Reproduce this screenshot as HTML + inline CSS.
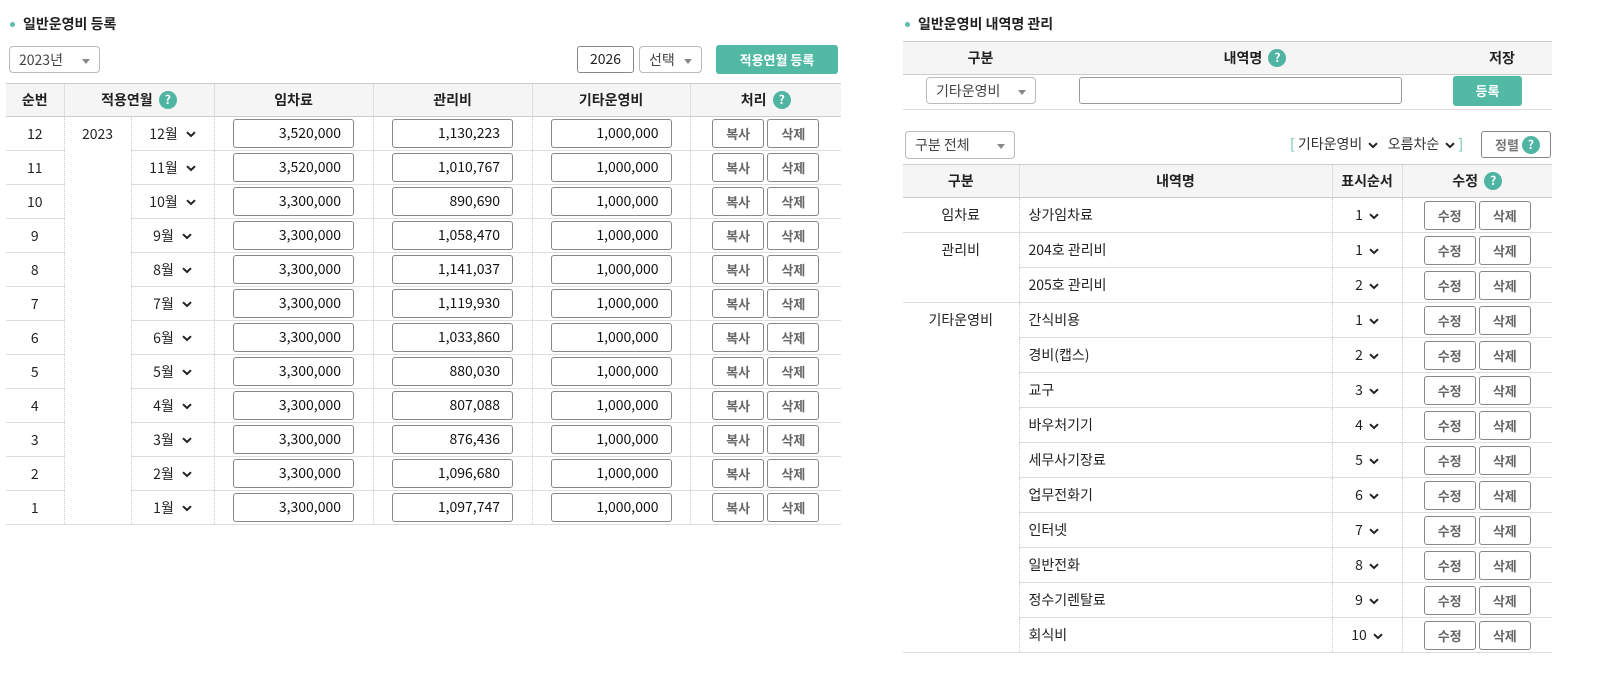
<!DOCTYPE html>
<html><head><meta charset="utf-8">
<style>
*{box-sizing:border-box;margin:0;padding:0}
body{width:1597px;height:682px;background:#fff;font-family:"Noto Sans CJK KR","Liberation Sans",sans-serif;font-size:14px;color:#222;position:relative;overflow:hidden}
.abs{position:absolute}
.title{font-weight:bold;font-size:14px;color:#222;line-height:20px}
.dot{display:inline-block;width:5px;height:5px;border-radius:50%;background:#5dbcaa;margin-right:8px;vertical-align:middle;position:relative;top:-1px}
.sel{position:absolute;border:1px solid #bbb;border-radius:4px;background:#fff;color:#444;font-size:14px;padding-left:9px;display:flex;align-items:center}
.sel .ar{position:absolute;right:9px;top:50%;margin-top:-1px;width:0;height:0;border-left:4px solid transparent;border-right:4px solid transparent;border-top:5px solid #888}
.q{display:inline-block;width:18px;height:18px;border-radius:50%;background:#4fb5a2;color:#fff;font-size:12px;font-weight:bold;text-align:center;line-height:18px;vertical-align:middle;position:relative;top:-1px;margin-left:3px}
table{border-collapse:collapse;table-layout:fixed;position:absolute}
th{background:#f5f5f5;font-weight:bold;font-size:14px;border-top:1px solid #ccc;border-bottom:1px solid #ccc;border-left:1px solid #ddd;color:#222;padding:0}
th:first-child{border-left:none}
td{border-bottom:1px solid #ddd;border-left:1px dotted #ccc;text-align:center;font-size:14px;padding:0;line-height:20px}
td:first-child{border-left:none}
.inp{display:inline-block;width:121px;height:29px;border:1px solid #888;border-radius:3px;text-align:right;padding-right:12px;line-height:27px;font-size:14px;color:#111;vertical-align:middle}
.btn{display:inline-block;width:52px;height:29px;border:1px solid #888;border-radius:3px;font-size:13px;color:#666;font-weight:bold;line-height:27px;text-align:center;background:#fff;vertical-align:middle}
.chev{display:inline-block;width:10px;height:7px;vertical-align:middle;margin-left:8px;position:relative;top:0}
.teal{background:#52b9a5;color:#fff;font-weight:bold;border-radius:3px;text-align:center;font-size:13px}
</style></head><body>
<svg width="0" height="0" style="position:absolute"><defs><symbol id="cv" viewBox="0 0 10 7"><path d="M1 1.2 L5 5 L9 1.2" fill="none" stroke="#222" stroke-width="2"/></symbol></defs></svg>

<div class="abs title" style="left:10px;top:14px"><span class="dot"></span>일반운영비 등록</div>
<div class="sel" style="left:9px;top:46px;width:91px;height:27px">2023년<span class="ar"></span></div>
<div class="abs" style="left:577px;top:46px;width:57px;height:27px;border:1px solid #888;border-radius:3px;text-align:center;line-height:25px;font-size:14px">2026</div>
<div class="sel" style="left:639px;top:46px;width:63px;height:27px">선택<span class="ar"></span></div>
<div class="abs teal" style="left:716px;top:45px;width:122px;height:29px;line-height:29px">적용연월 등록</div>

<table style="left:6px;top:83px;width:835px">
<colgroup><col style="width:58px"><col style="width:67px"><col style="width:83px"><col style="width:159px"><col style="width:159px"><col style="width:158px"><col style="width:151px"></colgroup>
<tr style="height:33px"><th>순번</th><th colspan="2">적용연월 <span class="q">?</span></th><th>임차료</th><th>관리비</th><th>기타운영비</th><th>처리 <span class="q">?</span></th></tr>
<tr style="height:34px"><td>12</td><td rowspan="12" style="vertical-align:top;padding-top:7px">2023</td><td>12월<svg class="chev"><use href="#cv"/></svg></td><td><span class="inp">3,520,000</span></td><td><span class="inp">1,130,223</span></td><td><span class="inp">1,000,000</span></td><td><span class="btn">복사</span> <span class="btn">삭제</span></td></tr>
<tr style="height:34px"><td>11</td><td>11월<svg class="chev"><use href="#cv"/></svg></td><td><span class="inp">3,520,000</span></td><td><span class="inp">1,010,767</span></td><td><span class="inp">1,000,000</span></td><td><span class="btn">복사</span> <span class="btn">삭제</span></td></tr>
<tr style="height:34px"><td>10</td><td>10월<svg class="chev"><use href="#cv"/></svg></td><td><span class="inp">3,300,000</span></td><td><span class="inp">890,690</span></td><td><span class="inp">1,000,000</span></td><td><span class="btn">복사</span> <span class="btn">삭제</span></td></tr>
<tr style="height:34px"><td>9</td><td>9월<svg class="chev"><use href="#cv"/></svg></td><td><span class="inp">3,300,000</span></td><td><span class="inp">1,058,470</span></td><td><span class="inp">1,000,000</span></td><td><span class="btn">복사</span> <span class="btn">삭제</span></td></tr>
<tr style="height:34px"><td>8</td><td>8월<svg class="chev"><use href="#cv"/></svg></td><td><span class="inp">3,300,000</span></td><td><span class="inp">1,141,037</span></td><td><span class="inp">1,000,000</span></td><td><span class="btn">복사</span> <span class="btn">삭제</span></td></tr>
<tr style="height:34px"><td>7</td><td>7월<svg class="chev"><use href="#cv"/></svg></td><td><span class="inp">3,300,000</span></td><td><span class="inp">1,119,930</span></td><td><span class="inp">1,000,000</span></td><td><span class="btn">복사</span> <span class="btn">삭제</span></td></tr>
<tr style="height:34px"><td>6</td><td>6월<svg class="chev"><use href="#cv"/></svg></td><td><span class="inp">3,300,000</span></td><td><span class="inp">1,033,860</span></td><td><span class="inp">1,000,000</span></td><td><span class="btn">복사</span> <span class="btn">삭제</span></td></tr>
<tr style="height:34px"><td>5</td><td>5월<svg class="chev"><use href="#cv"/></svg></td><td><span class="inp">3,300,000</span></td><td><span class="inp">880,030</span></td><td><span class="inp">1,000,000</span></td><td><span class="btn">복사</span> <span class="btn">삭제</span></td></tr>
<tr style="height:34px"><td>4</td><td>4월<svg class="chev"><use href="#cv"/></svg></td><td><span class="inp">3,300,000</span></td><td><span class="inp">807,088</span></td><td><span class="inp">1,000,000</span></td><td><span class="btn">복사</span> <span class="btn">삭제</span></td></tr>
<tr style="height:34px"><td>3</td><td>3월<svg class="chev"><use href="#cv"/></svg></td><td><span class="inp">3,300,000</span></td><td><span class="inp">876,436</span></td><td><span class="inp">1,000,000</span></td><td><span class="btn">복사</span> <span class="btn">삭제</span></td></tr>
<tr style="height:34px"><td>2</td><td>2월<svg class="chev"><use href="#cv"/></svg></td><td><span class="inp">3,300,000</span></td><td><span class="inp">1,096,680</span></td><td><span class="inp">1,000,000</span></td><td><span class="btn">복사</span> <span class="btn">삭제</span></td></tr>
<tr style="height:34px"><td>1</td><td>1월<svg class="chev"><use href="#cv"/></svg></td><td><span class="inp">3,300,000</span></td><td><span class="inp">1,097,747</span></td><td><span class="inp">1,000,000</span></td><td><span class="btn">복사</span> <span class="btn">삭제</span></td></tr>
</table>

<div class="abs title" style="left:905px;top:14px"><span class="dot"></span>일반운영비 내역명 관리</div>
<table style="left:903px;top:41px;width:649px">
<colgroup><col style="width:155px"><col style="width:394px"><col style="width:100px"></colgroup>
<tr style="height:33px"><th style="border-left:none">구분</th><th style="border-left:none">내역명 <span class="q">?</span></th><th style="border-left:none">저장</th></tr>
<tr style="height:35px"><td style="border-left:none"></td><td style="border-left:none"></td><td style="border-left:none"></td></tr>
</table>
<div class="sel" style="left:926px;top:77px;width:110px;height:27px">기타운영비<span class="ar"></span></div>
<div class="abs" style="left:1079px;top:77px;width:323px;height:27px;border:1px solid #999;border-radius:3px"></div>
<div class="abs teal" style="left:1453px;top:76px;width:69px;height:30px;line-height:30px">등록</div>

<div class="sel" style="left:905px;top:131px;width:110px;height:28px">구분 전체<span class="ar"></span></div>
<div class="abs" style="left:1290px;top:134px;font-size:14px;color:#333;line-height:20px"><span style="color:#5dbcaa">[</span> 기타운영비<svg class="chev" style="margin-left:6px"><use href="#cv"/></svg>&nbsp;&nbsp;&nbsp;오름차순<svg class="chev" style="margin-left:6px"><use href="#cv"/></svg><span style="color:#5dbcaa"> ]</span></div>
<div class="abs" style="left:1481px;top:131px;width:70px;height:27px;border:1px solid #888;border-radius:3px;font-size:13px;font-weight:bold;color:#777;line-height:25px;padding-left:13px">정렬 <span class="q" style="margin-left:0">?</span></div>

<table style="left:903px;top:164px;width:649px">
<colgroup><col style="width:116px"><col style="width:313px"><col style="width:70px"><col style="width:150px"></colgroup>
<tr style="height:33px"><th>구분</th><th>내역명</th><th>표시순서</th><th>수정 <span class="q">?</span></th></tr>
<tr style="height:35px"><td>임차료</td><td style="text-align:left;padding-left:9px">상가임차료</td><td>1<svg class="chev" style="margin-left:6px"><use href="#cv"/></svg></td><td><span class="btn">수정</span> <span class="btn">삭제</span></td></tr>
<tr style="height:35px"><td rowspan="2" style="vertical-align:top;padding-top:7px">관리비</td><td style="text-align:left;padding-left:9px">204호 관리비</td><td>1<svg class="chev" style="margin-left:6px"><use href="#cv"/></svg></td><td><span class="btn">수정</span> <span class="btn">삭제</span></td></tr>
<tr style="height:35px"><td style="text-align:left;padding-left:9px;border-left:1px dotted #ccc">205호 관리비</td><td>2<svg class="chev" style="margin-left:6px"><use href="#cv"/></svg></td><td><span class="btn">수정</span> <span class="btn">삭제</span></td></tr>
<tr style="height:35px"><td rowspan="10" style="vertical-align:top;padding-top:7px">기타운영비</td><td style="text-align:left;padding-left:9px">간식비용</td><td>1<svg class="chev" style="margin-left:6px"><use href="#cv"/></svg></td><td><span class="btn">수정</span> <span class="btn">삭제</span></td></tr>
<tr style="height:35px"><td style="text-align:left;padding-left:9px;border-left:1px dotted #ccc">경비(캡스)</td><td>2<svg class="chev" style="margin-left:6px"><use href="#cv"/></svg></td><td><span class="btn">수정</span> <span class="btn">삭제</span></td></tr>
<tr style="height:35px"><td style="text-align:left;padding-left:9px;border-left:1px dotted #ccc">교구</td><td>3<svg class="chev" style="margin-left:6px"><use href="#cv"/></svg></td><td><span class="btn">수정</span> <span class="btn">삭제</span></td></tr>
<tr style="height:35px"><td style="text-align:left;padding-left:9px;border-left:1px dotted #ccc">바우처기기</td><td>4<svg class="chev" style="margin-left:6px"><use href="#cv"/></svg></td><td><span class="btn">수정</span> <span class="btn">삭제</span></td></tr>
<tr style="height:35px"><td style="text-align:left;padding-left:9px;border-left:1px dotted #ccc">세무사기장료</td><td>5<svg class="chev" style="margin-left:6px"><use href="#cv"/></svg></td><td><span class="btn">수정</span> <span class="btn">삭제</span></td></tr>
<tr style="height:35px"><td style="text-align:left;padding-left:9px;border-left:1px dotted #ccc">업무전화기</td><td>6<svg class="chev" style="margin-left:6px"><use href="#cv"/></svg></td><td><span class="btn">수정</span> <span class="btn">삭제</span></td></tr>
<tr style="height:35px"><td style="text-align:left;padding-left:9px;border-left:1px dotted #ccc">인터넷</td><td>7<svg class="chev" style="margin-left:6px"><use href="#cv"/></svg></td><td><span class="btn">수정</span> <span class="btn">삭제</span></td></tr>
<tr style="height:35px"><td style="text-align:left;padding-left:9px;border-left:1px dotted #ccc">일반전화</td><td>8<svg class="chev" style="margin-left:6px"><use href="#cv"/></svg></td><td><span class="btn">수정</span> <span class="btn">삭제</span></td></tr>
<tr style="height:35px"><td style="text-align:left;padding-left:9px;border-left:1px dotted #ccc">정수기렌탈료</td><td>9<svg class="chev" style="margin-left:6px"><use href="#cv"/></svg></td><td><span class="btn">수정</span> <span class="btn">삭제</span></td></tr>
<tr style="height:35px"><td style="text-align:left;padding-left:9px;border-left:1px dotted #ccc">회식비</td><td>10<svg class="chev" style="margin-left:6px"><use href="#cv"/></svg></td><td><span class="btn">수정</span> <span class="btn">삭제</span></td></tr>
</table>
</body></html>
